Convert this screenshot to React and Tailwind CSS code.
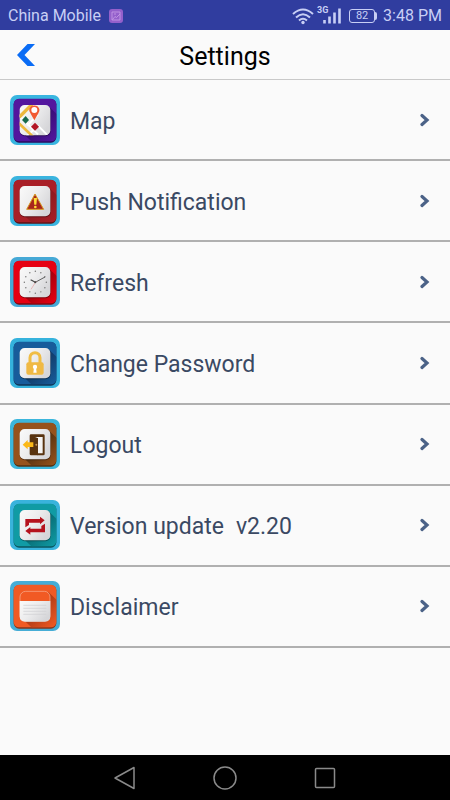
import React from 'react';

function Tile({ id, base, rim, shade, frame, plain, children }) {
  return (
    <svg viewBox="0 0 150 150" className="size-[50px] shrink-0" aria-hidden="true">
      <defs>
        <linearGradient id={id + '-face'} x1="0" y1="0" x2="1" y2="0.6">
          <stop offset="0" stopColor="#fafafa" />
          <stop offset="0.5" stopColor="#ededee" />
          <stop offset="1" stopColor="#d6d6d9" />
        </linearGradient>
        <clipPath id={id + '-clip'}>
          <rect x="11" y="11" width="128" height="130" rx="15" />
        </clipPath>
        <linearGradient id={id + '-shade'} x1="0.2" y1="0.2" x2="1" y2="1">
          <stop offset="0.3" stopColor={shade} />
          <stop offset="0.85" stopColor={shade} stopOpacity="0" />
        </linearGradient>
      </defs>
      <rect width="150" height="150" rx="21" fill={frame} />
      <rect x="11" y="12" width="128" height="131" rx="16" fill={rim} />
      <rect x="11" y="11" width="128" height="128" rx="16" fill={base} />
      <g clipPath={'url(#' + id + '-clip)'}>
        <path d="M116 34 L150 66 V150 H76 L42 118 Z" fill={'url(#' + id + '-shade)'} />
      </g>
      {!plain && (
        <>
          <rect x="29" y="32" width="93" height="92" rx="15" fill="#000" opacity="0.35" />
          <rect x="29" y="30" width="92" height="91" rx="15" fill={'url(#' + id + '-face)'} />
        </>
      )}
      {children}
    </svg>
  );
}

function MapIcon() {
  return (
    <Tile id="map" base="#53169e" rim="#2b0b5c" shade="#3a0d78" frame="#39b5e0">
      <clipPath id="map-face-clip">
        <rect x="29" y="30" width="92" height="91" rx="15" />
      </clipPath>
      <g clipPath="url(#map-face-clip)" fill="none">
        <path d="M20 54 L84 118 M52 92 L84 58 M84 92 L116 124 M50 124 L84 92" stroke="#fff" strokeWidth="6" />
        <path d="M28 66 L66 28" stroke="#edb83c" strokeWidth="10" />
        <path d="M24 82 L72 128" stroke="#edb83c" strokeWidth="8" />
      </g>
      <path d="M47 63 L57 75 L47 86 L36 75 Z" fill="#176a4a" />
      <path d="M75 83 L87 95 L75 107 L63 95 Z" fill="#b31524" />
      <path d="M73 76 L62 56 Q56 47 58 42 A16 16 0 0 1 88 42 Q90 48 84 57 Z" fill="#f15a32" />
      <circle cx="73" cy="45" r="9" fill="#fff" />
    </Tile>
  );
}

function WarningIcon() {
  return (
    <Tile id="warn" base="#a91f27" rim="#5c1216" shade="#8f1a20" frame="#3ab4df">
      <path d="M75 54 L101 100 H50 Z" fill="#a8261c" stroke="#d99b22" strokeWidth="3" strokeLinejoin="round" />
      <path d="M71 66 H81 L79 86 H73 Z" fill="#ffdc35" />
      <circle cx="76" cy="93" r="4" fill="#ffdc35" />
    </Tile>
  );
}

function ClockIcon() {
  return (
    <Tile id="clock" base="#e60012" rim="#7d0911" shade="#a9000c" frame="#46a9d6">
      {Array.from({ length: 12 }, (_, i) => (
        <circle
          key={i}
          cx={76 + 33 * Math.sin((i * Math.PI) / 6)}
          cy={76 - 33 * Math.cos((i * Math.PI) / 6)}
          r="2.2"
          fill="#777"
        />
      ))}
      <path d="M76 76 L62 68" stroke="#444" strokeWidth="3.5" />
      <path d="M74 77 L105 60" stroke="#444" strokeWidth="2.5" />
      <path d="M79 72 L63 97" stroke="#e58080" strokeWidth="1.5" />
      <circle cx="76" cy="76" r="3" fill="#444" />
    </Tile>
  );
}

function LockIcon() {
  return (
    <Tile id="lock" base="#175c9b" rim="#103456" shade="#123e6c" frame="#35b2dc">
      <path d="M60 76 V59 A15 15 0 0 1 90 59 V76" fill="none" stroke="#f0bd45" strokeWidth="9" />
      <rect x="49" y="73" width="52" height="37" rx="6" fill="#f0b944" />
      <circle cx="75" cy="87" r="6.5" fill="#fff" />
      <path d="M72 89 H78 L80 104 H70 Z" fill="#fff" />
    </Tile>
  );
}

function DoorIcon() {
  return (
    <Tile id="door" base="#96521c" rim="#53300f" shade="#5e3510" frame="#3cb6dc">
      <rect x="59" y="46" width="45" height="63" rx="4" fill="#58330f" />
      <path d="M74 54 H98 V103 H84 V58 Z" fill="#f4f3f2" />
      <path d="M62 51 L84 58 V109 L62 103 Z" fill="#58330f" />
      <path d="M38 77 L53 63 V70 H70 V84 H53 V91 Z" fill="#fbb817" />
      <circle cx="79" cy="77" r="3" fill="#c99655" />
    </Tile>
  );
}

function UpdateIcon() {
  return (
    <Tile id="update" base="#109ba4" rim="#0a555c" shade="#087078" frame="#39b3dc">
      <path d="M46 82 V57 H90 V50 L104 61 L90 73 V68 H57 V75 Z" fill="#b5121d" />
      <path d="M105 71 V97 H61 V104 L46 93 L61 81 V86 H94 V78 Z" fill="#b5121d" />
    </Tile>
  );
}

function NoteIcon() {
  return (
    <Tile id="note" base="#f15a24" rim="#87351a" shade="#b53e17" frame="#46add6" plain>
      <rect x="30" y="31" width="90" height="89" rx="17" fill="#f15a24" stroke="#f8b59a" strokeWidth="2" />
      <path d="M29 60 H121 V106 Q121 122 105 122 H45 Q29 122 29 106 Z" fill="url(#note-face)" />
      <path d="M40 73 H109 M40 82 H109 M40 91 H109 M40 100 H109" stroke="#cfcfd1" strokeWidth="2" />
    </Tile>
  );
}

function Chevron() {
  return (
    <svg viewBox="0 0 10 14" className="h-[14px] w-[10px] shrink-0" fill="none" aria-hidden="true">
      <path d="M2 2.500 L7 7 L2 11.500" stroke="#4b6287" strokeWidth="3.2" strokeLinecap="round" />
    </svg>
  );
}

const items = [
  { label: 'Map', Icon: MapIcon },
  { label: 'Push Notification', Icon: WarningIcon },
  { label: 'Refresh', Icon: ClockIcon },
  { label: 'Change Password', Icon: LockIcon },
  { label: 'Logout', Icon: DoorIcon },
  { label: 'Version update', detail: 'v2.20', Icon: UpdateIcon },
  { label: 'Disclaimer', Icon: NoteIcon },
];

function StatusBar() {
  return (
    <div className="flex h-[30px] items-center justify-between bg-[#303d9f] px-2 pt-px text-base text-[#c8cff5]">
      <div className="flex items-center gap-2">
        <span>China Mobile</span>
        <svg viewBox="0 0 14 14" className="size-[14px]" fill="none" aria-hidden="true">
          <rect width="14" height="14" rx="3" fill="#9460cb" />
          <path d="M3 3 H11 V11 H3 Z M3.500 10.500 L6 7.500 L7.500 8.500 L11 5 M5 5 H7" stroke="#c9a0e8" strokeWidth="0.8" />
        </svg>
      </div>
      <div className="flex items-center">
        <svg viewBox="0 0 50 20" className="h-5 w-[50px]" fill="none" stroke="#c8cff5" aria-hidden="true">
          <path d="M1 8 Q11 -1 21 8 M4 11.5 Q11 5 18 11.5 M7 14.5 Q11 11 15 14.5" strokeWidth="2" />
          <circle cx="11" cy="16.5" r="1.7" fill="#c8cff5" stroke="none" />
          <text x="25" y="7" fontSize="9" fontWeight="700" fill="#c8cff5" stroke="none">3G</text>
          <path d="M32.500 14 V17.500 M37.500 10.500 V17.500 M42.500 6.500 V17.500 M47.500 2.500 V17.500" strokeWidth="2.6" />
        </svg>
        <div className="ml-[7px] flex h-[14px] w-[26px] items-center justify-center rounded-[3px] border border-[#c8cff5] pt-px text-[11px] leading-3">
          82
        </div>
        <div className="mr-[6px] h-2 w-[2px] rounded-r-sm bg-[#c8cff5]" />
        <span>3:48 PM</span>
      </div>
    </div>
  );
}

export default function App() {
  return (
    <div className="flex min-h-screen flex-col bg-[#fafafa] font-['Roboto',sans-serif]">
      <StatusBar />
      <header className="grid h-[50px] grid-cols-[48px_1fr_48px] items-center border-b border-[#c9c9c9]">
        <button type="button" aria-label="Back" className="flex h-full items-center pl-[17px]">
          <svg viewBox="0 0 18 22" className="h-[22px] w-[18px]" fill="#0a6cf5" aria-hidden="true">
            <path d="M10.500 0 H18 L7.500 11 L18 22 H10.500 L0 11 Z" />
          </svg>
        </button>
        <h1 className="pt-1 text-center text-[25px] leading-8 text-black">Settings</h1>
      </header>
      <main className="flex-1">
        <ul className="grid min-h-[568px] grid-rows-7">
          {items.map(({ label, detail, Icon }) => (
            <li key={label} className="border-b-2 border-[#b0b0b0]">
              <button type="button" className="flex h-full w-full items-center gap-[10px] pl-[10px] pr-5 text-left text-[23px] leading-8 text-[#3a4963]">
                <Icon />
                <span className="flex flex-1 gap-3 pt-1">
                  <span>{label}</span>
                  {detail && <span>{detail}</span>}
                </span>
                <Chevron />
              </button>
            </li>
          ))}
        </ul>
      </main>
      <nav className="flex h-[45px] items-center justify-center gap-[76px] bg-black" aria-label="System">
        <button type="button" aria-label="Go back">
          <svg viewBox="0 0 24 24" className="size-6" fill="none" stroke="#8a8a8a" strokeWidth="1.5" strokeLinejoin="round">
            <path d="M21 1.500 V22.500 L2 12 Z" />
          </svg>
        </button>
        <button type="button" aria-label="Home">
          <svg viewBox="0 0 24 24" className="size-6" fill="none" stroke="#8a8a8a" strokeWidth="1.5">
            <circle cx="12" cy="12" r="11" />
          </svg>
        </button>
        <button type="button" aria-label="Recent apps">
          <svg viewBox="0 0 24 24" className="size-6" fill="none" stroke="#8a8a8a" strokeWidth="1.5">
            <rect x="2.500" y="2.500" width="19" height="19" rx="1" />
          </svg>
        </button>
      </nav>
    </div>
  );
}
